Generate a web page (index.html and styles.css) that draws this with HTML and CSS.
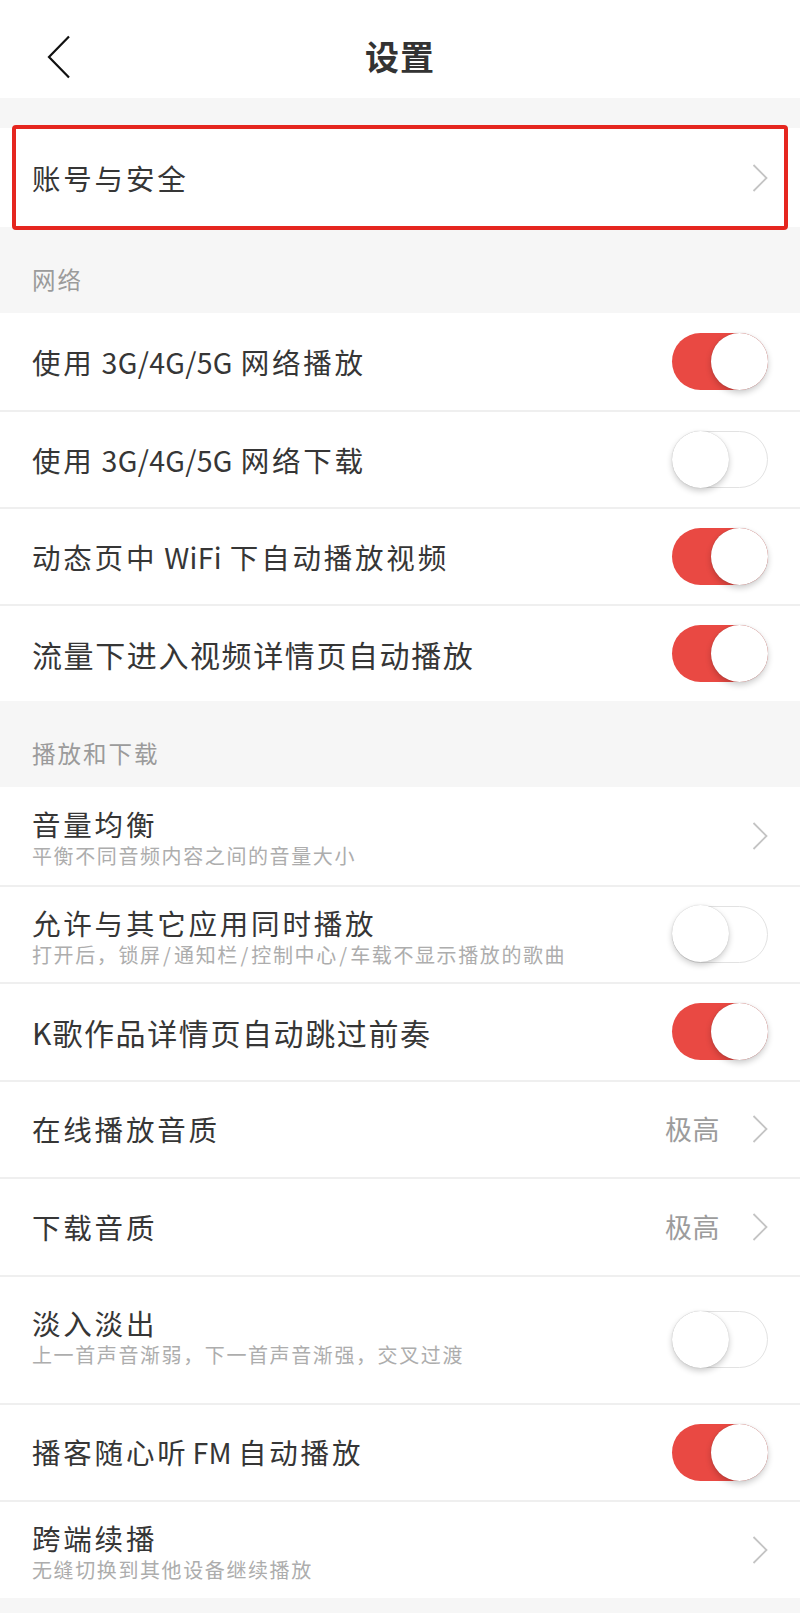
FILE: index.html
```html
<!DOCTYPE html>
<html lang="zh-CN">
<head>
<meta charset="utf-8">
<title>设置</title>
<link rel="stylesheet" href="styles.css">
</head>
<body>
<header class="nav">
  <span class="back">
    <svg width="24" height="44" viewBox="0 0 24 44"><path d="M22 1.5 L2 22 L22 42.5" fill="none" stroke="#111" stroke-width="2.2"/></svg>
  </span>
  <h1 class="nav-title">设置</h1>
</header>

<div class="gap"></div>

<section class="group">
  <div class="row row-account">
    <div class="text"><div class="title">账号与安全</div></div>
    <svg class="chev" width="16" height="28" viewBox="0 0 16 28"><path d="M1.5 1 L14.5 14 L1.5 27" fill="none" stroke="#c4c4c4" stroke-width="1.8"/></svg>
    <div class="annot"></div>
  </div>
</section>

<div class="label">网络</div>
<section class="group net">
  <div class="row">
    <div class="text"><div class="title">使用<span class="lat">3G/4G/5G</span>网络播放</div></div>
    <span class="switch on"><span class="knob"></span></span>
  </div>
  <div class="row">
    <div class="text"><div class="title">使用<span class="lat">3G/4G/5G</span>网络下载</div></div>
    <span class="switch off"><span class="knob"></span></span>
  </div>
  <div class="row">
    <div class="text"><div class="title">动态页中<span class="lat">WiFi</span>下自动播放视频</div></div>
    <span class="switch on"><span class="knob"></span></span>
  </div>
  <div class="row">
    <div class="text"><div class="title wide">流量下进入视频详情页自动播放</div></div>
    <span class="switch on"><span class="knob"></span></span>
  </div>
</section>

<div class="label">播放和下载</div>
<section class="group">
  <div class="row">
    <div class="text two"><div class="title">音量均衡</div><div class="sub">平衡不同音频内容之间的音量大小</div></div>
    <svg class="chev" width="16" height="28" viewBox="0 0 16 28"><path d="M1.5 1 L14.5 14 L1.5 27" fill="none" stroke="#c4c4c4" stroke-width="1.8"/></svg>
  </div>
  <div class="row">
    <div class="text two"><div class="title">允许与其它应用同时播放</div><div class="sub">打开后，锁屏<span class="sl">/</span>通知栏<span class="sl">/</span>控制中心<span class="sl">/</span>车载不显示播放的歌曲</div></div>
    <span class="switch off"><span class="knob"></span></span>
  </div>
  <div class="row">
    <div class="text"><div class="title wide"><span class="lat-k">K</span>歌作品详情页自动跳过前奏</div></div>
    <span class="switch on"><span class="knob"></span></span>
  </div>
  <div class="row">
    <div class="text"><div class="title">在线播放音质</div></div>
    <span class="value">极高</span>
    <svg class="chev" width="16" height="28" viewBox="0 0 16 28"><path d="M1.5 1 L14.5 14 L1.5 27" fill="none" stroke="#c4c4c4" stroke-width="1.8"/></svg>
  </div>
  <div class="row">
    <div class="text"><div class="title">下载音质</div></div>
    <span class="value">极高</span>
    <svg class="chev" width="16" height="28" viewBox="0 0 16 28"><path d="M1.5 1 L14.5 14 L1.5 27" fill="none" stroke="#c4c4c4" stroke-width="1.8"/></svg>
  </div>
  <div class="row row-tall">
    <div class="text two raised"><div class="title">淡入淡出</div><div class="sub">上一首声音渐弱，下一首声音渐强，交叉过渡</div></div>
    <span class="switch off"><span class="knob"></span></span>
  </div>
  <div class="row">
    <div class="text"><div class="title">播客随心听<span class="lat lat-tight">FM</span>自动播放</div></div>
    <span class="switch on"><span class="knob"></span></span>
  </div>
  <div class="row">
    <div class="text two"><div class="title">跨端续播</div><div class="sub">无缝切换到其他设备继续播放</div></div>
    <svg class="chev" width="16" height="28" viewBox="0 0 16 28"><path d="M1.5 1 L14.5 14 L1.5 27" fill="none" stroke="#c4c4c4" stroke-width="1.8"/></svg>
  </div>
</section>
<div class="foot"></div>
</body>
</html>
```

FILE: styles.css
```css
* { box-sizing: border-box; }

html, body {
  margin: 0;
  padding: 0;
  background: #f6f6f6;
  font-family: "Noto Sans CJK SC", "Noto Sans", sans-serif;
  color: #363636;
}

.nav {
  height: 98px;
  background: #fff;
  display: flex;
  align-items: center;
  justify-content: center;
  position: relative;
}

.back {
  position: absolute;
  left: 47px;
  top: 35px;
  width: 24px;
  height: 44px;
  display: block;
}

.back svg { display: block; }

.nav-title {
  margin: 0;
  padding-top: 14px;
  font-size: 34px;
  font-weight: 700;
  letter-spacing: 1px;
  color: #333;
  line-height: 40px;
}

.gap { height: 30px; }

.group { background: #fff; }

.row {
  height: 97.5px;
  padding: 0 32px;
  display: flex;
  align-items: center;
  border-top: 2px solid #efefef;
  position: relative;
}

.net .row { height: 97px; }

.row:first-child { border-top: none; }

.row-account { height: 99px; }

.row-tall { height: 128px; }

.text { flex: 1; min-width: 0; }

.text.two { padding-top: 3px; }

.text.raised { padding-top: 0; margin-bottom: 8px; }

.title {
  font-size: 28.5px;
  letter-spacing: 2.8px;
  line-height: 38px;
  white-space: nowrap;
}

.title.wide {
  font-size: 30px;
  letter-spacing: 1.6px;
}

.lat {
  letter-spacing: 0.3px;
  margin: 0 8px 0 7px;
}

.lat-tight { margin: 0 6px 0 4px; }

.lat-k { letter-spacing: 1px; }

.sub {
  font-size: 20px;
  letter-spacing: 1.6px;
  line-height: 26px;
  color: #adadad;
  white-space: nowrap;
}

.sl { margin: 0 1.5px; }

.label {
  height: 86px;
  padding: 37px 32px 0;
  font-size: 23.5px;
  letter-spacing: 2px;
  line-height: 30px;
  color: #9b9b9b;
}

.value {
  font-size: 27px;
  letter-spacing: 0.5px;
  line-height: 36px;
  color: #9c9c9c;
  margin-right: 32px;
}

.chev { display: block; flex: none; }

.switch {
  flex: none;
  width: 96px;
  height: 57px;
  border-radius: 29px;
  position: relative;
  display: block;
}

.switch.on { background: #e94943; }

.switch.off {
  background: #fff;
  border: 1.5px solid #e2e2e2;
}

.knob {
  position: absolute;
  top: 0;
  width: 57px;
  height: 57px;
  border-radius: 50%;
  background: #fff;
  box-shadow: 0 3px 6px rgba(0, 0, 0, 0.2), 0 0 1px rgba(0, 0, 0, 0.25);
}

.switch.on .knob { right: 0; }

.switch.off .knob { left: -1.5px; top: -1.5px; }

.annot {
  position: absolute;
  left: 12px;
  right: 12px;
  top: -3px;
  bottom: -3px;
  border: 4px solid #e5261f;
  border-radius: 4px;
  pointer-events: none;
}

.foot { height: 14px; }
```
